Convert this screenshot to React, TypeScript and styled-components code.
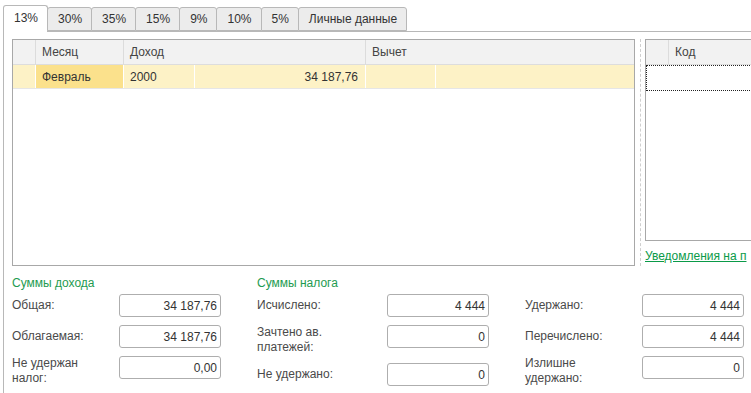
import React from "react";
import styled, { createGlobalStyle } from "styled-components";

const Global = createGlobalStyle`
  html, body { margin: 0; padding: 0; background: #fff; }
  body { font-family: "Liberation Sans", Arial, sans-serif; font-size: 12px; color: #333; }
`;

const Page = styled.div`
  width: 751px;
  height: 393px;
  overflow: hidden;
  display: flex;
  flex-direction: column;
  background: #fff;
`;

const TabBar = styled.div`
  display: flex;
  align-items: flex-end;
  padding: 5px 0 0 3px;
  height: 26px;
  position: relative;
  z-index: 1;
`;

const Tab = styled.div<{ $active?: boolean }>`
  box-sizing: border-box;
  height: ${(p) => (p.$active ? "27px" : "24px")};
  margin-bottom: ${(p) => (p.$active ? "-1px" : "0")};
  padding: 0 9px 0 10px;
  display: flex;
  align-items: center;
  padding-bottom: ${(p) => (p.$active ? "2px" : "0")};
  border: 1px solid #b8b8b8;
  border-bottom: ${(p) => (p.$active ? "none" : "1px solid #b8b8b8")};
  border-radius: 3px 3px 0 0;
  background: ${(p) => (p.$active ? "#fff" : "#ececec")};
  color: #333;
  white-space: nowrap;
  & + & { margin-left: -1px; }
`;

const Panel = styled.div`
  flex: 1;
  margin-left: 3px;
  border-top: 1px solid #b8b8b8;
  border-left: 1px solid #b8b8b8;
  padding: 7px 0 0 8px;
  min-width: 0;
`;

const Upper = styled.div`
  display: flex;
  height: 227px;
`;

const Table = styled.div<{ $w?: number; $h: number }>`
  box-sizing: border-box;
  width: ${(p) => (p.$w ? `${p.$w}px` : "auto")};
  flex: none;
  height: ${(p) => p.$h}px;
  border: 1px solid #a8a8a8;
  overflow: hidden;
  background: #fff;
`;

const HeaderRow = styled.div`
  display: flex;
  height: 25px;
  box-sizing: border-box;
  background: #f2f2f2;
  border-bottom: 1px solid #dddddd;
`;

const HCell = styled.div<{ $w?: number }>`
  box-sizing: border-box;
  width: ${(p) => (p.$w ? `${p.$w}px` : "auto")};
  flex: ${(p) => (p.$w ? "none" : "1")};
  border-right: 1px solid #dcdcdc;
  padding: 0 6px;
  display: flex;
  align-items: center;
  color: #444;
  white-space: nowrap;
  &:last-child { border-right: none; }
`;

const DataRow = styled.div`
  display: flex;
  height: 24px;
  box-sizing: border-box;
  background: #fdf2c6;
  border-bottom: 1px solid #e6e6e6;
`;

const Cell = styled.div<{ $w?: number; $right?: boolean; $current?: boolean }>`
  box-sizing: border-box;
  width: ${(p) => (p.$w ? `${p.$w}px` : "auto")};
  flex: ${(p) => (p.$w ? "none" : "1")};
  border-right: 1px solid #ffffff;
  padding: 0 7px 0 6px;
  display: flex;
  align-items: center;
  justify-content: ${(p) => (p.$right ? "flex-end" : "flex-start")};
  background: ${(p) => (p.$current ? "#fbe18c" : "transparent")};
  color: #333;
  white-space: nowrap;
  &:last-child { border-right: none; }
`;

const FocusRow = styled.div`
  height: 26px;
  box-sizing: border-box;
  border: 1px dotted #222;
  border-right: none;
`;

const Divider = styled.div`
  width: 0;
  flex: none;
  margin: 0 4px 0 5px;
  border-left: 1px dashed #cfcfcf;
`;

const RightCol = styled.div`
  flex: none;
  width: 220px;
  display: flex;
  flex-direction: column;
`;

const Link = styled.a`
  margin-top: 8px;
  line-height: 15px;
  color: #0a9a48;
  text-decoration: underline;
  white-space: nowrap;
  font-size: 12px;
`;

const Lower = styled.div`
  display: flex;
  gap: 36px;
  margin-top: 9px;
`;

const Group = styled.div`
  display: flex;
  flex-direction: column;
`;

const GroupTitle = styled.div`
  height: 16px;
  line-height: 16px;
  margin-bottom: 3px;
  color: #1e9b50;
  white-space: nowrap;
`;

const Rows = styled.div`
  display: flex;
  flex-direction: column;
  gap: 8px;
`;

const FieldRow = styled.div`
  display: flex;
  align-items: flex-start;
`;

const Label = styled.div<{ $w: number }>`
  width: ${(p) => p.$w}px;
  min-height: 23px;
  display: flex;
  align-items: center;
  line-height: 15px;
  color: #4a4a4a;
  padding-right: 8px;
  box-sizing: border-box;
`;

const Input = styled.div`
  box-sizing: border-box;
  width: 102px;
  height: 23px;
  border: 1px solid #aeaeae;
  border-radius: 3px;
  background: #fff;
  display: flex;
  align-items: center;
  justify-content: flex-end;
  padding-right: 3px;
  color: #333;
`;

type Field = { label: React.ReactNode; value: string };

const FieldGroup: React.FC<{ title?: string; labelWidth: number; fields: Field[] }> = ({ title, labelWidth, fields }) => (
  <Group>
    <GroupTitle aria-hidden={!title}>{title ?? "\u00a0"}</GroupTitle>
    <Rows>
      {fields.map((f, i) => (
        <FieldRow key={i}>
          <Label $w={labelWidth}>{f.label}</Label>
          <Input>{f.value}</Input>
        </FieldRow>
      ))}
    </Rows>
  </Group>
);

const tabs = ["13%", "30%", "35%", "15%", "9%", "10%", "5%", "Личные данные"];

export default function App() {
  return (
    <Page>
      <Global />
      <TabBar>
        {tabs.map((t, i) => (
          <Tab key={t} $active={i === 0}>{t}</Tab>
        ))}
      </TabBar>
      <Panel>
        <Upper>
          <Table $w={623} $h={227}>
            <HeaderRow>
              <HCell $w={23} />
              <HCell $w={88}>Месяц</HCell>
              <HCell $w={242}>Доход</HCell>
              <HCell>Вычет</HCell>
            </HeaderRow>
            <DataRow>
              <Cell $w={23} />
              <Cell $w={88} $current>Февраль</Cell>
              <Cell $w={71}>2000</Cell>
              <Cell $w={171} $right>34 187,76</Cell>
              <Cell $w={70} />
              <Cell />
            </DataRow>
          </Table>
          <Divider />
          <RightCol>
            <Table $w={220} $h={202}>
              <HeaderRow>
                <HCell $w={23} />
                <HCell>Код</HCell>
              </HeaderRow>
              <FocusRow />
            </Table>
            <Link>Уведомления на п</Link>
          </RightCol>
        </Upper>
        <Lower>
          <FieldGroup
            title="Суммы дохода"
            labelWidth={107}
            fields={[
              { label: "Общая:", value: "34 187,76" },
              { label: "Облагаемая:", value: "34 187,76" },
              { label: <>Не удержан<br />налог:</>, value: "0,00" },
            ]}
          />
          <FieldGroup
            title="Суммы налога"
            labelWidth={130}
            fields={[
              { label: "Исчислено:", value: "4 444" },
              { label: <>Зачтено ав.<br />платежей:</>, value: "0" },
              { label: "Не удержано:", value: "0" },
            ]}
          />
          <FieldGroup
            labelWidth={117}
            fields={[
              { label: "Удержано:", value: "4 444" },
              { label: "Перечислено:", value: "4 444" },
              { label: <>Излишне<br />удержано:</>, value: "0" },
            ]}
          />
        </Lower>
      </Panel>
    </Page>
  );
}
